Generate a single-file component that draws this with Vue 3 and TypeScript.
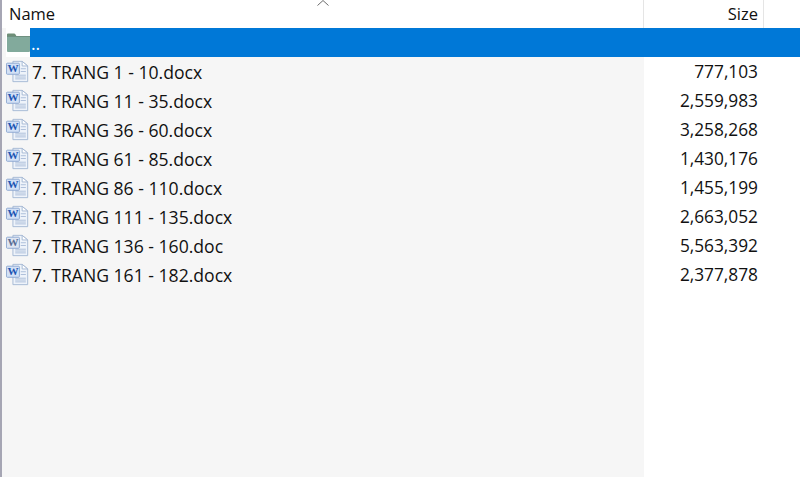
<template>
  <div class="listing">
    <div class="head">
      <div class="head-name">Name</div>
      <svg class="sort" width="14" height="6" viewBox="0 0 14 6"><path d="M1.500 5.500 7 .5l5.500 5" fill="none" stroke="#6b6b6b" /></svg>
      <div class="head-size">Size</div>
    </div>
    <div class="rows">
      <div class="row selected">
        <span class="ico up">
          <svg width="23" height="20" viewBox="0 0 23 20">
            <path d="M0 4V1.500Q0 .5 1 .5h6q1 0 1.500 1L10 4z" fill="#6f8f78" />
            <rect x="0" y="3" width="23" height="16" rx="1" fill="#82aa9c" />
            <rect x="0" y="3" width="23" height="1" fill="#6f9080" />
          </svg>
        </span>
        <span class="name">..</span>
        <span class="size"></span>
      </div>
      <div v-for="f in files" :key="f.name" class="row">
        <span class="ico">
          <svg width="25" height="25" viewBox="0 0 26 25">
            <path d="M7.500 1.500h10l6 5v17h-16z" fill="#eef3fa" stroke="#a3b6d2" />
            <path d="M17.500 1.500v5h6z" fill="#fff" stroke="#a3b6d2" stroke-linejoin="round" />
            <path d="M16 9.500h5.500M16 12.500h5.500M10 16.500h11.500M10 18.500h11.500M10 20.500h11.500" stroke="#a9bcd8" />
            <rect x=".5" y="3.500" width="14" height="12" rx="1" :fill="f.old ? '#dfe6f2' : '#d3e1f6'" stroke="#8aa5cf" />
            <text x="7.500" y="13.500" text-anchor="middle" class="w" :fill="f.old ? '#5b6f96' : '#1f56b3'">W</text>
          </svg>
        </span>
        <span class="name">{{ f.name }}</span>
        <span class="size">{{ f.size }}</span>
      </div>
    </div>
  </div>
</template>

<script setup lang="ts">
type FileRow = { name: string; size: string; old?: boolean }

const files: FileRow[] = [
  { name: '7. TRANG 1 - 10.docx', size: '777,103' },
  { name: '7. TRANG 11 - 35.docx', size: '2,559,983' },
  { name: '7. TRANG 36 - 60.docx', size: '3,258,268' },
  { name: '7. TRANG 61 - 85.docx', size: '1,430,176' },
  { name: '7. TRANG 86 - 110.docx', size: '1,455,199' },
  { name: '7. TRANG 111 - 135.docx', size: '2,663,052' },
  { name: '7. TRANG 136 - 160.doc', size: '5,563,392', old: true },
  { name: '7. TRANG 161 - 182.docx', size: '2,377,878' },
]
</script>

<style>
html,
body {
  background: #fff;
  overflow: hidden;
}
</style>

<style scoped>
.listing {
  width: 800px;
  height: 477px;
  box-sizing: border-box;
  border-left: 2px solid #a6a6b4;
  font-family: "Open Sans", "Noto Sans", sans-serif;
  font-size: 16.500px;
  color: #111;
  background: linear-gradient(to right, #f6f6f6 642px, #fff 642px);
  overflow: hidden;
}

.head {
  position: relative;
  display: grid;
  grid-template-columns: 642px 120px;
  height: 28px;
  background: #fff;
  line-height: 27px;
}

.head-name {
  padding-left: 7px;
  border-right: 1px solid #e5e5e5;
}

.head-size {
  padding-right: 5px;
  text-align: right;
  border-right: 1px solid #e5e5e5;
}

.sort {
  position: absolute;
  left: 314px;
  top: 0;
}

.row {
  display: grid;
  grid-template-columns: 28px 614px 114px 42px;
  grid-template-rows: 29px;
  font-size: 17.600px;
  line-height: 30px;
}

.selected .name,
.selected .size {
  background: #0078d7;
  color: #fff;
}

.selected .name {
  padding-left: 1px;
}

.selected .size {
  grid-column: 3 / 5;
}

.ico {
  display: flex;
  align-items: center;
  height: 29px;
  padding-left: 4px;
}

.up {
  margin-left: 4px;
  padding-left: 0;
  background: #fff;
  justify-content: center;
}

.name {
  padding-left: 2px;
  white-space: nowrap;
}

.size {
  text-align: right;
  font-size: 17.300px;
}

.w {
  font-family: "Liberation Serif", serif;
  font-size: 12px;
  font-weight: 700;
}
</style>
